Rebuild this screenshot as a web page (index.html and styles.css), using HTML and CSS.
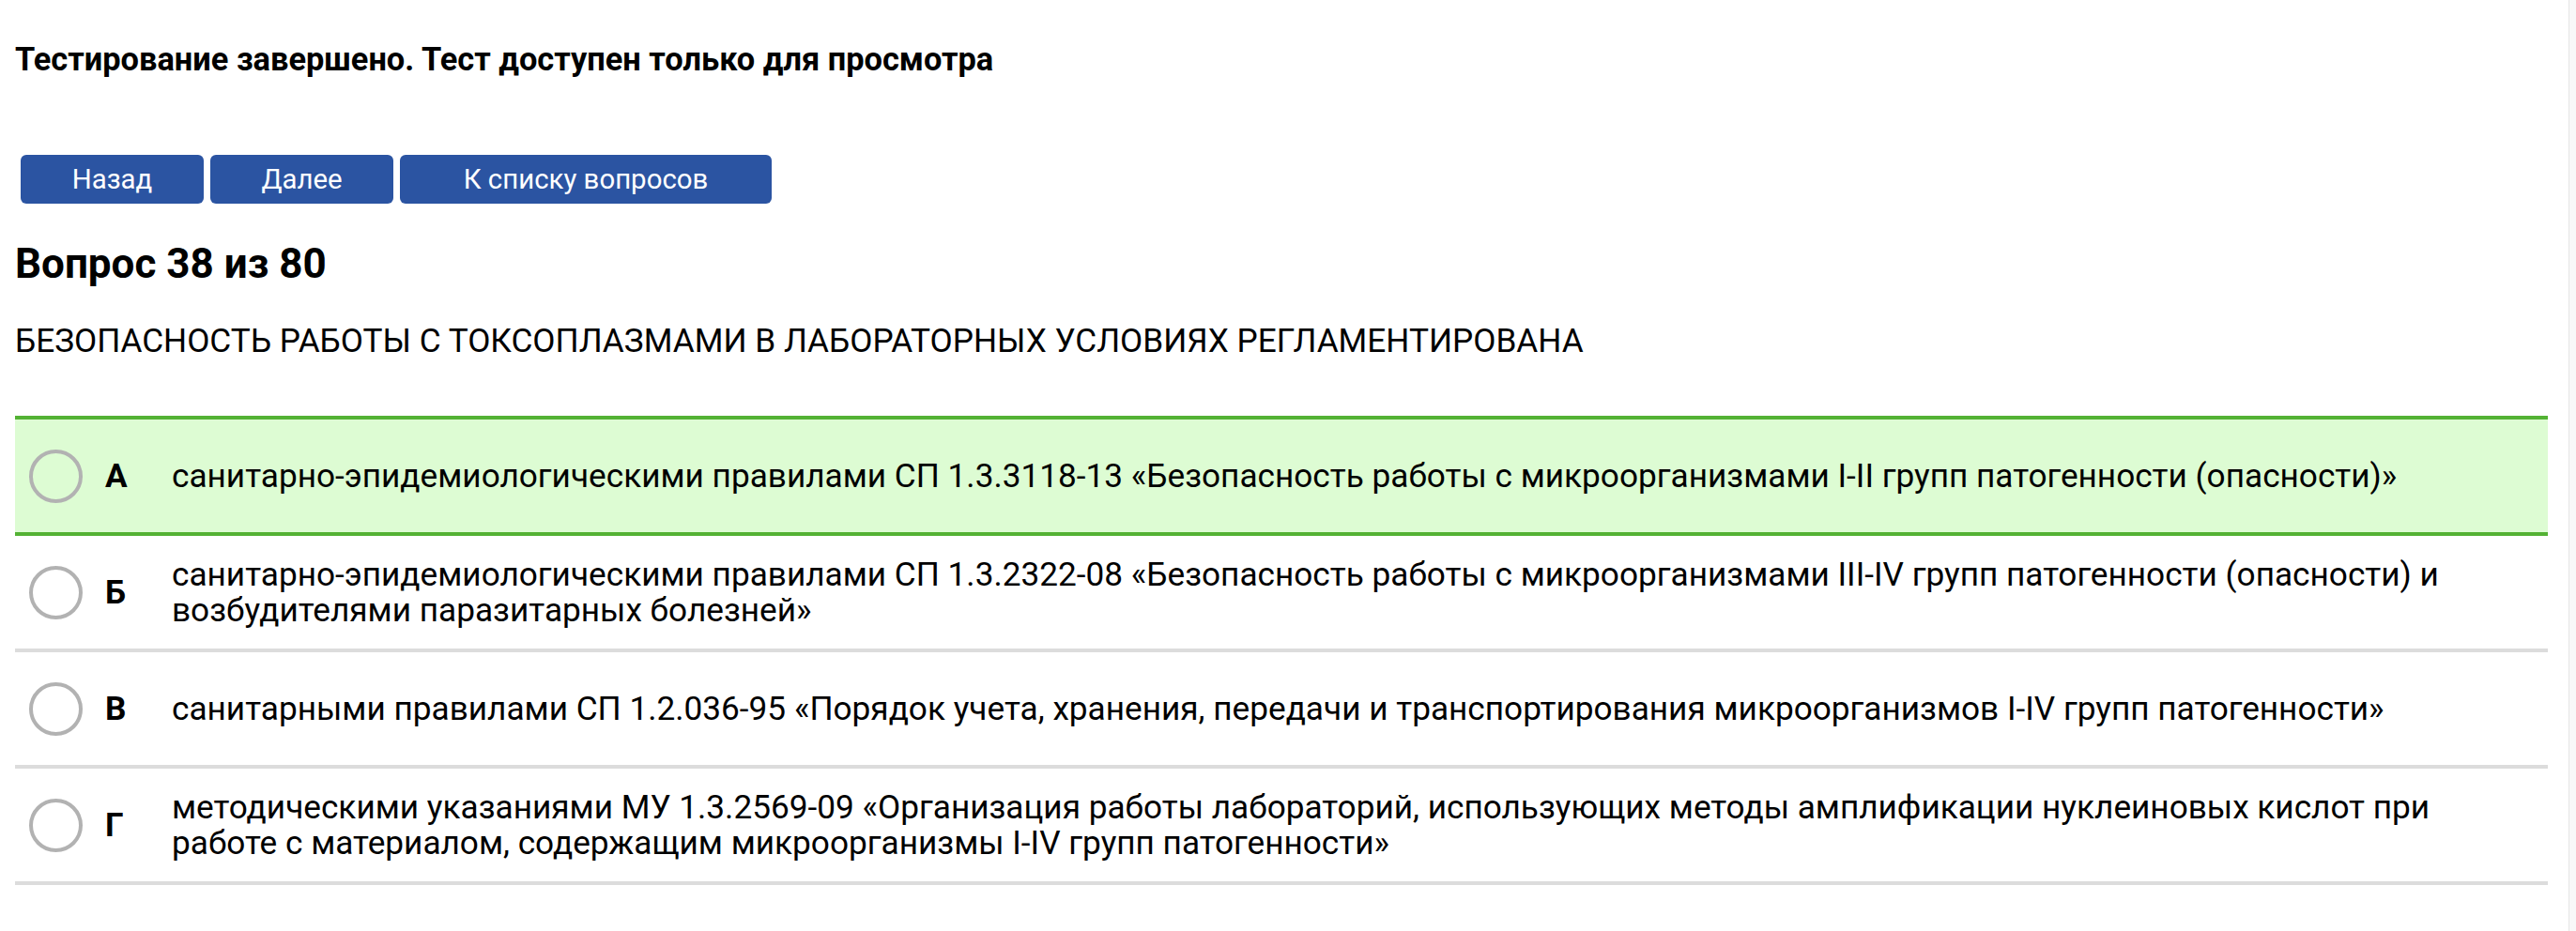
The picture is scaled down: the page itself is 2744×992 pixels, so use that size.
FILE: index.html
```html
<!DOCTYPE html>
<html lang="ru">
<head>
<meta charset="utf-8">
<title>Тест</title>
<link rel="stylesheet" href="styles.css">
</head>
<body>
<div class="page">
  <main class="content">
    <h1 class="status">Тестирование завершено. Тест доступен только для просмотра</h1>
    <nav class="nav">
      <button class="btn btn-short">Назад</button>
      <button class="btn btn-short">Далее</button>
      <button class="btn btn-long">К списку вопросов</button>
    </nav>
    <h2 class="qnum">Вопрос 38 из 80</h2>
    <p class="qtext">БЕЗОПАСНОСТЬ РАБОТЫ С ТОКСОПЛАЗМАМИ В ЛАБОРАТОРНЫХ УСЛОВИЯХ РЕГЛАМЕНТИРОВАНА</p>
    <ul class="answers">
      <li class="answer answer-correct">
        <span class="radio"></span>
        <span class="letter">А</span>
        <span class="text">санитарно-эпидемиологическими правилами СП 1.3.3118-13 «Безопасность работы с микроорганизмами I-II групп патогенности (опасности)»</span>
      </li>
      <li class="answer">
        <span class="radio"></span>
        <span class="letter">Б</span>
        <span class="text">санитарно-эпидемиологическими правилами СП 1.3.2322-08 «Безопасность работы с микроорганизмами III-IV групп патогенности (опасности) и возбудителями паразитарных болезней»</span>
      </li>
      <li class="answer">
        <span class="radio"></span>
        <span class="letter">В</span>
        <span class="text">санитарными правилами СП 1.2.036-95 «Порядок учета, хранения, передачи и транспортирования микроорганизмов I-IV групп патогенности»</span>
      </li>
      <li class="answer">
        <span class="radio"></span>
        <span class="letter">Г</span>
        <span class="text">методическими указаниями МУ 1.3.2569-09 «Организация работы лабораторий, использующих методы амплификации нуклеиновых кислот при работе с материалом, содержащим микроорганизмы I-IV групп патогенности»</span>
      </li>
    </ul>
  </main>
  <div class="scrollbar"></div>
</div>
</body>
</html>
```
FILE: styles.css
```css
html, body {
  margin: 0;
  padding: 0;
  background: #ffffff;
}

body {
  font-family: Roboto, "Liberation Sans", Arial, sans-serif;
  color: #000000;
}

.page {
  display: flex;
  height: 100vh;
  overflow: hidden;
}

.content {
  flex: 1;
  padding: 42px 22px 0 16px;
  min-width: 0;
}

.scrollbar {
  width: 7px;
  flex-shrink: 0;
  background: #f8f8f8;
  border-left: 1px solid #e6e6e6;
}

.status {
  margin: 0;
  font-size: 34.4px;
  line-height: 42px;
  font-weight: 700;
}

.nav {
  display: flex;
  gap: 7px;
  margin-top: 81px;
  padding-left: 6px;
}

.btn {
  height: 52px;
  border: none;
  border-radius: 6px;
  background: #2b54a2;
  color: #ffffff;
  font-family: Roboto, "Liberation Sans", Arial, sans-serif;
  font-size: 29.4px;
  line-height: 52px;
  padding: 0;
}

.btn-short {
  width: 195px;
}

.btn-long {
  width: 396px;
}

.qnum {
  margin: 39px 0 0 0;
  font-size: 44px;
  line-height: 50px;
  font-weight: 700;
}

.qtext {
  margin: 36px 0 0 0;
  font-size: 35.2px;
  line-height: 42px;
}

.answers {
  list-style: none;
  margin: 59px 0 0 0;
  padding: 0;
}

.answer {
  display: flex;
  align-items: center;
  min-height: 120px;
  padding: 0 20px 0 15px;
  border-bottom: 4px solid #dcdcdc;
}

.answer-correct {
  background: #ddfcd3;
  border-top: 4px solid #53b234;
  border-bottom-color: #53b234;
}

.radio {
  flex-shrink: 0;
  width: 57px;
  height: 57px;
  box-sizing: border-box;
  border: 4px solid #b2b2b2;
  border-radius: 50%;
  margin-right: 24px;
}

.letter {
  flex-shrink: 0;
  width: 71px;
  font-size: 35.2px;
  line-height: 38.5px;
  font-weight: 700;
}

.text {
  flex: 1;
  font-size: 35.2px;
  line-height: 38.5px;
}
```
